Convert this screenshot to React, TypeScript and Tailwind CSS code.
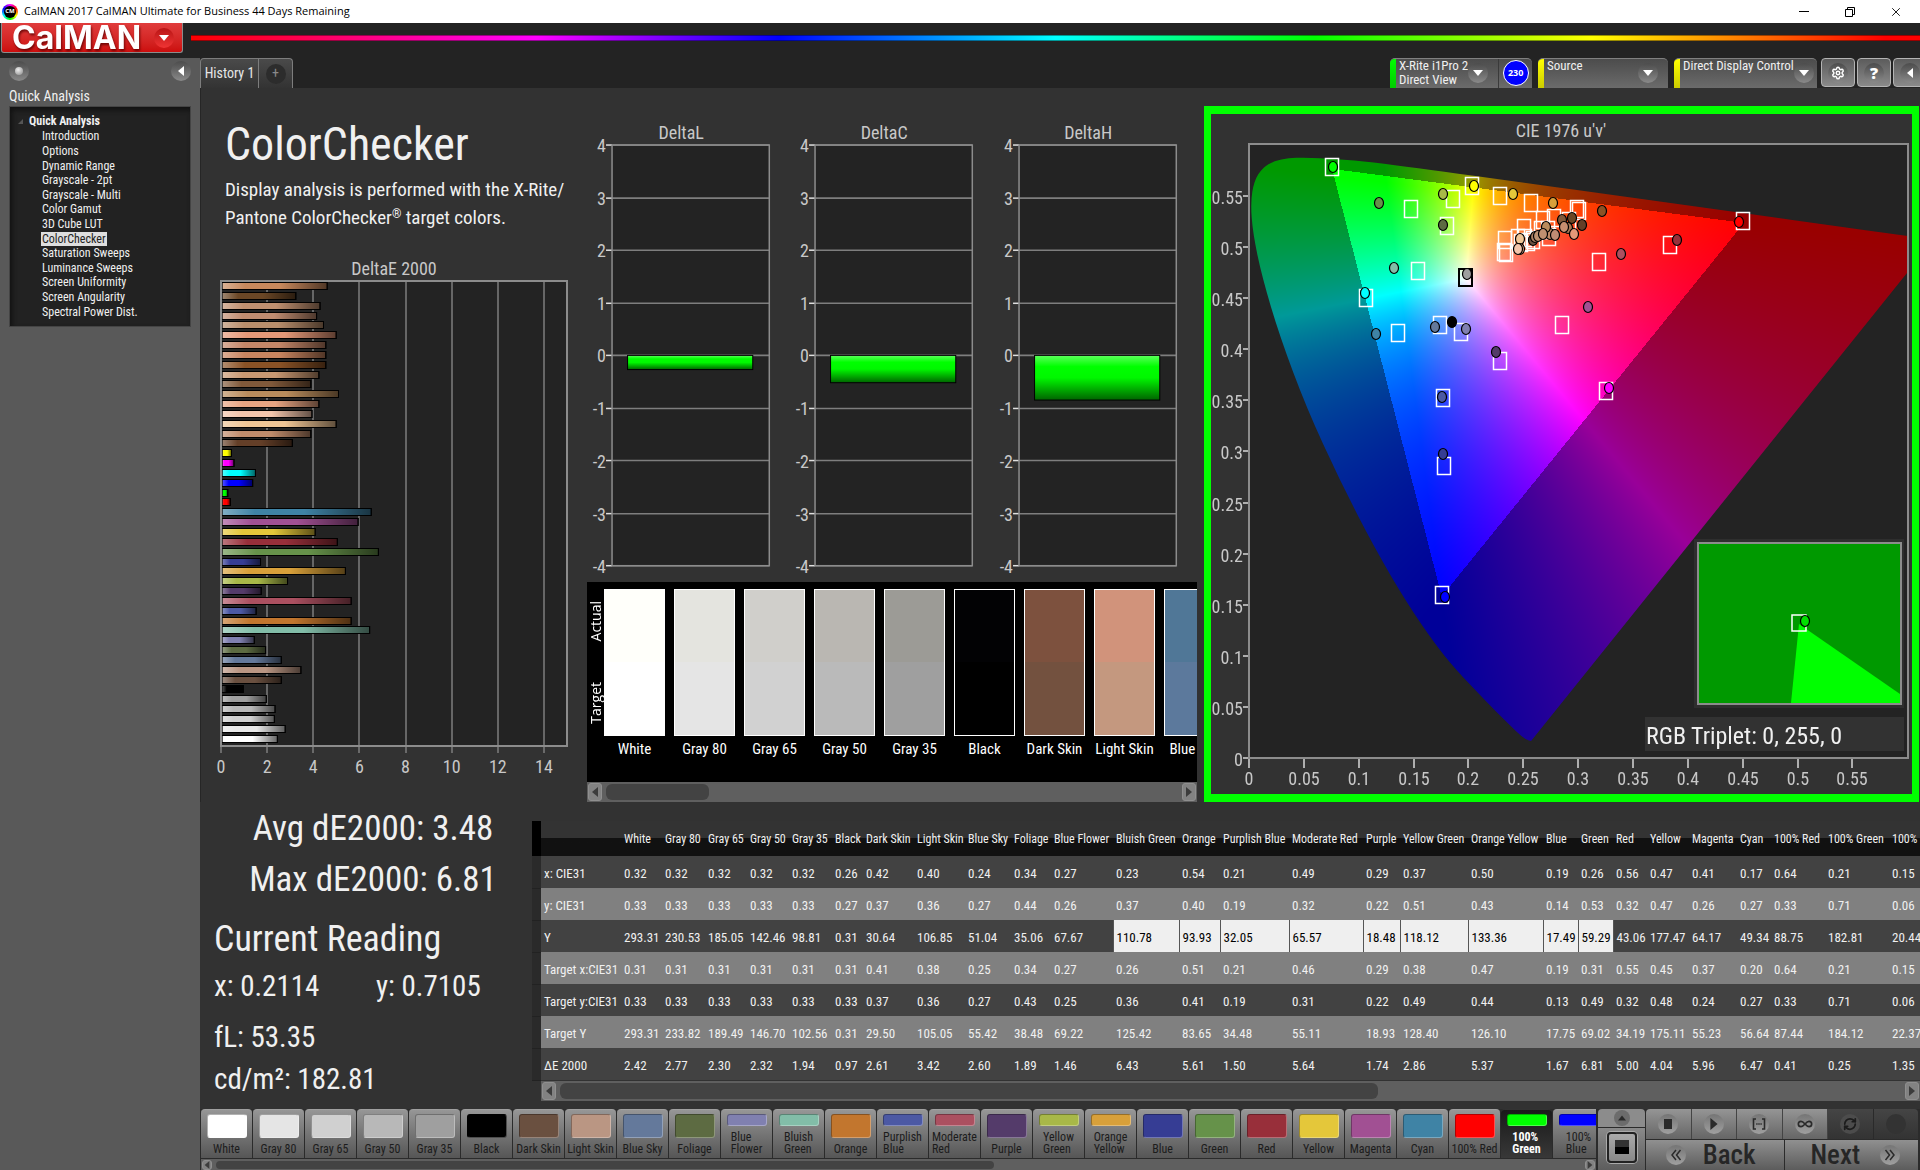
import { useEffect, useRef, type ReactNode } from 'react';
import { Infinity as InfinityIcon, RefreshCw, Settings, X } from 'lucide-react';

type Patch = { name: string; color: string; split?: boolean };

const PATCHES: Patch[] = [
  { name: 'White', color: '#ffffff' },
  { name: 'Gray 80', color: '#e5e5e5' },
  { name: 'Gray 65', color: '#d0d0d0' },
  { name: 'Gray 50', color: '#b8b8b8' },
  { name: 'Gray 35', color: '#9f9f9f' },
  { name: 'Black', color: '#000000' },
  { name: 'Dark Skin', color: '#6a5040' },
  { name: 'Light Skin', color: '#ba9683' },
  { name: 'Blue Sky', color: '#64799b' },
  { name: 'Foliage', color: '#5d6b42' },
  { name: 'Blue Flower', color: '#8080b0', split: true },
  { name: 'Bluish Green', color: '#82bda8', split: true },
  { name: 'Orange', color: '#c2762e' },
  { name: 'Purplish Blue', color: '#4c59a4', split: true },
  { name: 'Moderate Red', color: '#ab5060', split: true },
  { name: 'Purple', color: '#543b6a' },
  { name: 'Yellow Green', color: '#a8b848', split: true },
  { name: 'Orange Yellow', color: '#d8a03a', split: true },
  { name: 'Blue', color: '#363d94' },
  { name: 'Green', color: '#66924a' },
  { name: 'Red', color: '#982f3a' },
  { name: 'Yellow', color: '#e4c73a' },
  { name: 'Magenta', color: '#a15093' },
  { name: 'Cyan', color: '#3f83a5' },
  { name: '100% Red', color: '#ff0000' },
  { name: '100% Green', color: '#00ff00', split: true },
  { name: '100% Blue', color: '#0000ff', split: true },
];

const COLUMN_WIDTHS = [
  41, 43, 42, 42, 43, 31, 51, 51, 46, 40, 62, 66, 41, 69, 74, 37, 68, 75, 35, 35, 34, 42, 48, 34, 54, 64, 64,
];

const ROWS: { label: string; values: string }[] = [
  { label: 'x: CIE31', values: '0.32 0.32 0.32 0.32 0.32 0.26 0.42 0.40 0.24 0.34 0.27 0.23 0.54 0.21 0.49 0.29 0.37 0.50 0.19 0.26 0.56 0.47 0.41 0.17 0.64 0.21 0.15' },
  { label: 'y: CIE31', values: '0.33 0.33 0.33 0.33 0.33 0.27 0.37 0.36 0.27 0.44 0.26 0.37 0.40 0.19 0.32 0.22 0.51 0.43 0.14 0.53 0.32 0.47 0.26 0.27 0.33 0.71 0.06' },
  { label: 'Y', values: '293.31 230.53 185.05 142.46 98.81 0.31 30.64 106.85 51.04 35.06 67.67 110.78 93.93 32.05 65.57 18.48 118.12 133.36 17.49 59.29 43.06 177.47 64.17 49.34 88.75 182.81 20.44' },
  { label: 'Target x:CIE31', values: '0.31 0.31 0.31 0.31 0.31 0.31 0.41 0.38 0.25 0.34 0.27 0.26 0.51 0.21 0.46 0.29 0.38 0.47 0.19 0.31 0.55 0.45 0.37 0.20 0.64 0.21 0.15' },
  { label: 'Target y:CIE31', values: '0.33 0.33 0.33 0.33 0.33 0.33 0.37 0.36 0.27 0.43 0.25 0.36 0.41 0.19 0.31 0.22 0.49 0.44 0.13 0.49 0.32 0.48 0.24 0.27 0.33 0.71 0.06' },
  { label: 'Target Y', values: '293.31 233.82 189.49 146.70 102.56 0.31 29.50 105.05 55.42 38.48 69.22 125.42 83.65 34.48 55.11 18.93 128.40 126.10 17.75 69.02 34.19 175.11 55.23 56.64 87.44 184.12 22.37' },
  { label: 'ΔE 2000', values: '2.42 2.77 2.30 2.32 1.94 0.97 2.61 3.42 2.60 1.89 1.46 6.43 5.61 1.50 5.64 1.74 2.86 5.37 1.67 6.81 5.00 4.04 5.96 6.47 0.41 0.25 1.35' },
];

const DELTA_E: [number, string][] = [
  [4.56, '#c8895d'], [3.2, '#6b4726'], [4.25, '#c09070'], [4.1, '#c08c70'], [4.4, '#b98e6c'],
  [4.95, '#e59878'], [4.5, '#c48668'], [4.5, '#c98560'], [4.5, '#8a5226'], [4.2, '#c99872'],
  [3.85, '#80593a'], [5.05, '#b98c5c'], [4.2, '#e8a582'], [3.9, '#f3c5ac'], [4.95, '#f0c696'],
  [3.85, '#c08c6c'], [3.05, '#643f28'], [0.41, '#ffff00'], [0.52, '#ff00ff'], [1.45, '#00ffff'],
  [1.33, '#0000ff'], [0.25, '#00ff00'], [0.36, '#ff0000'], [6.47, '#3f83a5'], [5.9, '#a15093'],
  [4.04, '#e4c73a'], [5, '#982f3a'], [6.78, '#66924a'], [1.67, '#363d94'], [5.35, '#d8a03a'],
  [2.84, '#a8b848'], [1.7, '#543b6a'], [5.6, '#ab5060'], [1.48, '#4c59a4'], [5.6, '#c2762e'],
  [6.4, '#82bda8'], [1.4, '#8080b0'], [1.89, '#5d6b42'], [2.57, '#64799b'], [3.42, '#ba9683'],
  [2.57, '#6a5040'], [0.92, '#000000'], [1.92, '#9f9f9f'], [2.3, '#b8b8b8'], [2.27, '#d0d0d0'],
  [2.74, '#e8e8e8'], [2.4, '#ffffff'],
];

const COMPARISON = [
  { name: 'White', actual: '#fffffa', target: '#ffffff' },
  { name: 'Gray 80', actual: '#e4e4df', target: '#e5e5e5' },
  { name: 'Gray 65', actual: '#d0cfcb', target: '#d1d1d1' },
  { name: 'Gray 50', actual: '#bab7b2', target: '#bababa' },
  { name: 'Gray 35', actual: '#9c9b96', target: '#9f9f9f' },
  { name: 'Black', actual: '#020204', target: '#000000' },
  { name: 'Dark Skin', actual: '#7d513e', target: '#73513f' },
  { name: 'Light Skin', actual: '#d1937b', target: '#c4987f' },
  { name: 'Blue Sky', actual: '#507797', target: '#5c799c' },
];

const NAV = [
  'Introduction', 'Options', 'Dynamic Range', 'Grayscale - 2pt', 'Grayscale - Multi', 'Color Gamut', '3D Cube LUT',
  'ColorChecker', 'Saturation Sweeps', 'Luminance Sweeps', 'Screen Uniformity', 'Screen Angularity', 'Spectral Power Dist.',
];

/* ---------- shared pieces ---------- */

function Knob({ children }: { children?: ReactNode }) {
  return (
    <span className="flex size-5 shrink-0 items-center justify-center rounded-full bg-linear-to-b from-[#4c4c4c] to-[#8a8a8a] text-white">
      {children}
    </span>
  );
}

function Triangle({ dir, className }: { dir: 'up' | 'down' | 'left' | 'right'; className?: string }) {
  const d = { up: 'M0 8 5 2 10 8z', down: 'M0 2h10L5 8z', left: 'M8 0v10L2 5z', right: 'M2 0v10l6-5z' }[dir];
  return (
    <svg viewBox="0 0 10 10" className={className ?? 'size-2.5'} fill="currentColor" aria-hidden="true">
      <path d={d} />
    </svg>
  );
}

function ScrollBar({ thumb, slim, label }: { thumb: string; slim?: boolean; label: string }) {
  const arrow =
    'flex shrink-0 items-center justify-center rounded-[3px] border border-[#8f8f8f] bg-[#828282] text-[#3c3c3c] ' +
    (slim ? 'w-2.5' : 'w-3.5');
  return (
    <div className={`flex items-stretch gap-1 bg-[#5f5f5f] p-px ${slim ? 'h-3' : 'h-5'}`} role="group" aria-label={label}>
      <button type="button" aria-label="Scroll left" className={arrow}>
        <Triangle dir="left" className={slim ? 'size-2' : 'size-2.5'} />
      </button>
      <div className="flex-1 py-px">
        <div className={`h-full rounded-md bg-[#434343] ${thumb}`} />
      </div>
      <button type="button" aria-label="Scroll right" className={arrow}>
        <Triangle dir="right" className={slim ? 'size-2' : 'size-2.5'} />
      </button>
    </div>
  );
}

/* ---------- chrome ---------- */

function TitleBar() {
  return (
    <header className="flex h-[23px] items-center bg-white pl-0.5 font-['Open_Sans',sans-serif] text-black">
      <span className="flex size-4 items-center justify-center rounded-full bg-[conic-gradient(#f0f,#f00,#ff0,#0f0,#0ff,#00f,#f0f)]">
        <span className="flex size-3 items-center justify-center rounded-full bg-black text-[6px] font-bold text-white">CM</span>
      </span>
      <span className="ml-1.5 flex-1 text-[11px]">CalMAN 2017 CalMAN Ultimate for Business 44 Days Remaining</span>
      <button type="button" aria-label="Minimize" className="flex w-[46px] justify-center">
        <span className="h-px w-2.5 bg-black" />
      </button>
      <button type="button" aria-label="Restore" className="flex w-[46px] justify-center">
        <svg viewBox="0 0 10 10" className="size-2.5" fill="none" stroke="#000" aria-hidden="true">
          <path d="M.5 2.5h7v7h-7zM2.5 2.5v-2h7v7h-2" />
        </svg>
      </button>
      <button type="button" aria-label="Close" className="mr-px flex w-[46px] justify-center">
        <X className="size-3.5" strokeWidth={1.5} />
      </button>
    </header>
  );
}

function BrandBar() {
  return (
    <div className="flex h-[35px] items-start gap-2 bg-[#232323]">
      <button
        type="button"
        className="ml-px flex h-[30px] w-[182px] items-center justify-between rounded-b-[3px] border border-t-0 border-[#8c8c8c] bg-linear-to-b from-[#e03c3c] to-[#cc0c0c] pr-2 pl-2.5 text-white"
      >
        <span className="font-['Inter',sans-serif] text-[32px] leading-[30px] font-bold drop-shadow-[1px_2px_1px_rgba(90,0,0,0.8)]">CalMAN</span>
        <span className="flex size-5 items-center justify-center rounded-full bg-linear-to-b from-[#b81414] to-[#f03434]">
          <Triangle dir="down" />
        </span>
      </button>
      <div className="mt-3 h-1.5 flex-1 border-y border-black/40 bg-[linear-gradient(90deg,#f00_0%,#f0f_20%,#00f_34%,#0ff_50%,#0f0_65%,#ff0_81%,#f00_98%)]" />
    </div>
  );
}

function Sidebar() {
  return (
    <aside className="w-[200px] shrink-0 bg-[#595959] px-[9px] pt-[3px] text-[#f0f0f0]">
      <div className="flex items-center justify-between">
        <button type="button" aria-label="Pin panel">
          <Knob>
            <span className="size-2 rounded-full bg-[radial-gradient(circle_at_40%_35%,#eee,#888)]" />
          </Knob>
        </button>
        <button type="button" aria-label="Collapse panel">
          <Knob>
            <Triangle dir="left" />
          </Knob>
        </button>
      </div>
      <h2 className="mt-[5px] text-[14px] leading-[20px]">Quick Analysis</h2>
      <nav className="h-[221px] border border-[#444] bg-[#222] pt-[6px] pl-2 text-[12px] shadow-[inset_2px_3px_5px_#111]">
        <div className="flex h-4 items-center gap-1.5 font-bold">
          <svg viewBox="0 0 5 5" className="size-[5px]" fill="#555" aria-hidden="true">
            <path d="M5 0v5H0z" />
          </svg>
          <a href="#quick-analysis">Quick Analysis</a>
        </div>
        <ul className="grid h-[190px] pl-[23px]">
          {NAV.map((item) => (
            <li key={item} className="flex items-center leading-[14px]">
              <a
                href={`#${item}`}
                className={item === 'ColorChecker' ? 'bg-[#dedede] px-px text-[#222]' : 'px-px'}
                aria-current={item === 'ColorChecker' ? 'page' : undefined}
              >
                {item}
              </a>
            </li>
          ))}
        </ul>
      </nav>
    </aside>
  );
}

function DeviceTab({ accent, width, children, extra }: { accent: string; width: string; children: ReactNode; extra?: ReactNode }) {
  return (
    <div
      className={`flex h-[30px] overflow-hidden rounded-t-[5px] border-t border-[#808080] bg-linear-to-b from-[#4c4c4c] to-[#6b6b6b] text-[#f0f0f0] ${width}`}
    >
      <button type="button" className="flex flex-1 items-start pr-2.5 text-left">
        <span className={`mr-[3px] h-full w-1.5 shrink-0 ${accent}`} />
        <span className="flex-1 text-[13px] leading-[14px] whitespace-nowrap">{children}</span>
        <span className="mt-1">
          <Knob>
            <Triangle dir="down" />
          </Knob>
        </span>
      </button>
      {extra}
    </div>
  );
}

function TabBar() {
  const square =
    'flex h-[29px] w-[34px] shrink-0 items-center justify-center rounded-[4px] border border-[#b4b4b4] bg-linear-to-b from-[#5c5c5c] to-[#8a8a8a]';
  return (
    <div className="flex h-[30px] items-end overflow-hidden bg-[#232323]">
      <div className="flex h-[30px] rounded-t-[4px] border border-b-0 border-[#7d7d7d] bg-linear-to-b from-[#4a4a4a] to-[#333] text-[#e6e6e6]">
        <button type="button" className="w-[58px] border-r border-[#7d7d7d] text-[14px]">History 1</button>
        <button type="button" aria-label="Add history" className="flex w-[33px] items-center justify-center">
          <span className="flex size-5 items-center justify-center rounded-full bg-[#2c2c2c] text-[14px] text-[#8a8a8a]">+</span>
        </button>
      </div>
      <div className="ml-auto flex items-start gap-[6px]">
        <DeviceTab
          accent="bg-linear-to-b from-[#00ff00] to-[#00cc00]"
          width="w-[142px]"
          extra={
            <div className="flex w-[34px] items-center justify-center border-l border-[#3a3a3a]">
              <span className="mb-0.5 flex size-[26px] items-center justify-center rounded-full border border-white bg-[#0000ff] font-['Open_Sans',sans-serif] text-[9px] font-bold text-white">
                230
              </span>
            </div>
          }
        >
          X-Rite i1Pro 2
          <br />
          Direct View
        </DeviceTab>
        <DeviceTab accent="bg-linear-to-b from-[#ffff00] to-[#cccc00]" width="w-[130px]">Source</DeviceTab>
        <DeviceTab accent="bg-linear-to-b from-[#ffff00] to-[#cccc00]" width="w-[143px]">Direct Display Control</DeviceTab>
        <div className="-mr-[7px] -ml-0.5 flex gap-0.5">
          <button type="button" aria-label="Settings" className={square}>
            <Knob><Settings className="size-3.5" strokeWidth={2.5} /></Knob>
          </button>
          <button type="button" aria-label="Help" className={square}>
            <Knob><span className="font-['Open_Sans',sans-serif] text-[16px] font-extrabold">?</span></Knob>
          </button>
          <button type="button" aria-label="Collapse toolbar" className={square}>
            <Knob><Triangle dir="left" /></Knob>
          </button>
        </div>
      </div>
    </div>
  );
}

/* ---------- charts ---------- */

function DeltaEChart() {
  const left = 221;
  const unit = 346 / 15;
  return (
    <svg viewBox="200 255 387 530" className="mt-[23px] w-full fill-[#c8c8c8] text-[18px]" role="img" aria-label="DeltaE 2000">
      <defs>
        <linearGradient id="bar-shade">
          <stop offset="0" stopColor="#fff" stopOpacity=".35" />
          <stop offset=".22" stopColor="#fff" stopOpacity="0" />
          <stop offset=".55" stopColor="#000" stopOpacity="0" />
          <stop offset="1" stopColor="#000" stopOpacity=".6" />
        </linearGradient>
      </defs>
      <text x="394" y="275" textAnchor="middle">DeltaE 2000</text>
      <rect x={left} y="281" width="346" height="465" fill="#232323" />
      {[0, 2, 4, 6, 8, 10, 12, 14].map((n) => (
        <g key={n}>
          <path d={`M${Math.round(left + n * unit)} 281V753`} stroke="#7e7e7e" strokeWidth="1.5" />
          <text x={left + n * unit} y="773" textAnchor="middle">{n}</text>
        </g>
      ))}
      {DELTA_E.map(([value, color], i) => {
        const y = Math.round(282 + i * 9.84);
        const w = value * unit;
        return (
          <g key={i} stroke="#000">
            <rect x={left + 1} y={y + 0.5} width={w} height="7" fill={color} />
            <rect x={left + 1} y={y + 0.5} width={w} height="7" fill="url(#bar-shade)" />
          </g>
        );
      })}
      <rect x={left} y="281" width="346" height="465" fill="none" stroke="#8c8c8c" strokeWidth="2" />
    </svg>
  );
}

function DeltaChart({ title, value }: { title: string; value: number }) {
  const zero = 235;
  return (
    <svg viewBox="0 0 203 460" className="min-w-0 flex-1 fill-[#c8c8c8] text-[18px]" role="img" aria-label={title}>
      <defs>
        <linearGradient id={`bar-${title}`} x2="0" y2="1">
          <stop offset="0" stopColor="#5dff5d" />
          <stop offset=".25" stopColor="#00ff00" />
          <stop offset=".5" stopColor="#00f800" />
          <stop offset="1" stopColor="#006400" />
        </linearGradient>
      </defs>
      <text x="94" y="19" textAnchor="middle">{title}</text>
      <rect x="25" y="25" width="157" height="420" fill="#232323" />
      {[4, 3, 2, 1, 0, -1, -2, -3, -4].map((n) => {
        const y = Math.round(zero - n * 52.5);
        return (
          <g key={n}>
            <path d={`M25 ${y}H182`} stroke="#7e7e7e" strokeWidth="1.5" />
            <path d={`M19 ${y}h6`} stroke="#e0e0e0" strokeWidth="1.5" />
            <text x="19" y={y + 7} textAnchor="end">{n}</text>
          </g>
        );
      })}
      <rect x="40.5" y={zero} width="125" height={value * 52.5} fill={`url(#bar-${title})`} stroke="#000" />
      <rect x="25" y="25" width="157" height="420" fill="none" stroke="#8c8c8c" strokeWidth="1.5" />
    </svg>
  );
}

function Comparison() {
  return (
    <div className="mt-px bg-black">
      <div className="flex h-[200px] overflow-hidden pt-[7px]">
        <div className="flex h-[147px] w-[17px] shrink-0 flex-col items-center justify-between pt-3 pb-3 font-['Open_Sans',sans-serif] text-[14px] leading-[17px] font-medium text-white">
          <span className="rotate-180 [writing-mode:vertical-rl]">Actual</span>
          <span className="rotate-180 [writing-mode:vertical-rl]">Target</span>
        </div>
        <div className="flex gap-[9px]">
          {COMPARISON.map((c) => (
            <figure key={c.name} className="w-[61px] shrink-0">
              <div className="flex h-[147px] flex-col border border-white">
                <div className="flex-1" style={{ backgroundColor: c.actual }} />
                <div className="flex-1" style={{ backgroundColor: c.target }} />
              </div>
              <figcaption className="mt-1 text-center text-[15px] leading-[18px] whitespace-nowrap text-white">{c.name}</figcaption>
            </figure>
          ))}
        </div>
      </div>
      <ScrollBar thumb="w-[103px]" label="Swatch scroll" />
    </div>
  );
}

/* Spectral locus of the CIE 1931 observer, x and y pairs. */
const LOCUS = [
  0.1741, 0.005, 0.1714, 0.0051, 0.1644, 0.0109, 0.1566, 0.0177, 0.144, 0.0297, 0.1355, 0.0399, 0.1241, 0.0578, 0.1096,
  0.0868, 0.0913, 0.1327, 0.0687, 0.2007, 0.0454, 0.295, 0.0235, 0.4127, 0.0082, 0.5384, 0.0039, 0.6548, 0.0139, 0.7502,
  0.0389, 0.812, 0.0743, 0.8338, 0.1142, 0.8262, 0.1547, 0.8059, 0.2296, 0.7543, 0.3016, 0.6923, 0.3731, 0.6245, 0.4441,
  0.5547, 0.5125, 0.4866, 0.5752, 0.4242, 0.627, 0.3725, 0.6658, 0.334, 0.6915, 0.3083, 0.719, 0.2809, 0.7347, 0.2653,
];
const PLOT_W = 659;
const PLOT_H = 614;

function Horseshoe() {
  const ref = useRef<HTMLCanvasElement>(null);
  useEffect(() => {
    const canvas = ref.current;
    const ctx = canvas?.getContext('2d');
    if (!canvas || !ctx) return;
    const image = ctx.createImageData(PLOT_W, PLOT_H);
    for (let py = 0; py < PLOT_H; py++) {
      for (let px = 0; px < PLOT_W; px++) {
        const u = ((px + 0.5) / PLOT_W) * 0.6;
        const v = (1 - (py + 0.5) / PLOT_H) * 0.6;
        const X = (9 * u) / (4 * v);
        const Z = (12 - 3 * u - 20 * v) / (4 * v);
        // Colour comes from the sRGB primaries; the bright gamut triangle is Adobe RGB.
        const lin = [
          3.2406 * X - 1.5372 - 0.4986 * Z,
          -0.9689 * X + 1.8758 + 0.0415 * Z,
          0.0557 * X - 0.204 + 1.057 * Z,
        ];
        const outside =
          2.04159 * X - 0.56501 - 0.34473 * Z < 0 ||
          -0.96924 * X + 1.87597 + 0.04156 * Z < 0 ||
          0.01344 * X - 0.11836 + 1.01517 * Z < 0;
        const top = Math.max(lin[0], lin[1], lin[2]);
        const gain = outside ? 153 : 255;
        const at = (py * PLOT_W + px) * 4;
        for (let k = 0; k < 3; k++) image.data[at + k] = (gain * Math.max(0, lin[k])) / top;
        image.data[at + 3] = 255;
      }
    }
    ctx.putImageData(image, 0, 0);
    const points: [number, number][] = [];
    for (let i = 0; i < LOCUS.length; i += 2) {
      const d = -2 * LOCUS[i] + 12 * LOCUS[i + 1] + 3;
      points.push([(((4 * LOCUS[i]) / d) * PLOT_W) / 0.6, PLOT_H - (((9 * LOCUS[i + 1]) / d) * PLOT_H) / 0.6]);
    }
    ctx.globalCompositeOperation = 'destination-in';
    ctx.beginPath();
    ctx.moveTo(points[0][0], points[0][1]);
    for (let i = 1; i < points.length - 1; i++) {
      const [x, y] = points[i];
      const [nx, ny] = points[i + 1];
      ctx.quadraticCurveTo(x, y, (x + nx) / 2, (y + ny) / 2);
    }
    const last = points[points.length - 1];
    ctx.lineTo(last[0], last[1]);
    ctx.closePath();
    ctx.fill();
  }, []);
  return <canvas ref={ref} width={PLOT_W} height={PLOT_H} className="block" />;
}

const TARGETS: [number, number][] = [
  [1332, 167], [1411, 209], [1453, 199], [1472, 186], [1447, 226], [1500, 196], [1531, 203], [1577, 209], [1579, 211],
  [1543, 220], [1554, 218], [1569, 221], [1524, 228], [1505, 240], [1504, 252], [1506, 253], [1518, 238], [1521, 243],
  [1525, 238], [1533, 240], [1528, 242], [1541, 230], [1548, 230], [1549, 237], [1418, 271], [1366, 298], [1398, 333],
  [1440, 325], [1461, 332], [1500, 361], [1443, 398], [1444, 466], [1562, 325], [1599, 262], [1606, 391], [1670, 245],
  [1743, 221], [1442, 595],
];
const READINGS: [number, number, string][] = [
  [1333, 167, '#00ff00'], [1379, 203, '#66924a'], [1443, 194, '#a8b848'], [1474, 186, '#ffff00'], [1513, 194, '#e4c73a'],
  [1553, 203, '#d8a03a'], [1602, 211, '#8a5226'], [1443, 225, '#5d6b42'], [1562, 220, '#80593a'], [1568, 228, '#a87a58'],
  [1572, 218, '#6b4726'], [1582, 225, '#643f28'], [1564, 227, '#c98f70'], [1574, 234, '#e59878'], [1550, 234, '#c08c68'],
  [1546, 227, '#b98c5c'], [1555, 235, '#c08c74'], [1533, 240, '#6a5040'], [1535, 237, '#a87f63'], [1538, 236, '#ba9070'],
  [1543, 234, '#c09070'], [1520, 239, '#f0c696'], [1520, 249, '#e8a582'], [1518, 249, '#f3c5ac'], [1394, 268, '#82bda8'],
  [1365, 293, '#00ffff'], [1376, 334, '#3f83a5'], [1435, 327, '#64799b'], [1452, 322, '#000000'], [1466, 329, '#8080b0'],
  [1496, 352, '#543b6a'], [1442, 397, '#4c59a4'], [1443, 454, '#363d94'], [1588, 307, '#a15093'], [1609, 388, '#ff00ff'],
  [1467, 274, '#9f9f9f'], [1621, 254, '#ab5060'], [1677, 240, '#982f3a'], [1739, 222, '#ff0000'], [1445, 597, '#0000ff'],
];

function Chromaticity() {
  const ticks = Array.from({ length: 12 }, (_, i) => i);
  const name = (i: number) => String(Math.round(i * 5) / 100);
  return (
    <section className="mt-[18px] mr-px ml-[7px] min-w-0 flex-1 self-start border-x-7 border-y-8 border-[#00ff00] bg-[#323232]">
      <svg viewBox="1211 114 701 680" className="w-full fill-[#c8c8c8] text-[18px]" role="img" aria-label="CIE 1976 u'v'">
        <text x="1561" y="137" textAnchor="middle">CIE 1976 u'v'</text>
        <rect x="1249" y="144" width="659" height="614" fill="#232323" />
        <foreignObject x="1249" y="144" width="659" height="614">
          <Horseshoe />
        </foreignObject>
        {ticks.map((i) => {
          const x = Math.round(1249 + i * 54.85);
          const y = Math.round(758 - i * 51.1);
          return (
            <g key={i}>
              <path d={`M${x} 759v9M1243 ${y}h6`} stroke="#d8d8d8" strokeWidth="1.5" />
              <text x={x} y="785" textAnchor="middle">{name(i)}</text>
              <text x="1243" y={y + 8} textAnchor="end">{name(i)}</text>
            </g>
          );
        })}
        <rect x="1249" y="144" width="659" height="614" fill="none" stroke="#8c8c8c" strokeWidth="2" />
        {TARGETS.map(([x, y], i) => (
          <rect key={i} x={x - 6.5} y={y - 8.5} width="13" height="17" fill="none" stroke="#fff" strokeWidth="1.5" />
        ))}
        <rect x="1459" y="269" width="13" height="17" fill="none" stroke="#000" strokeWidth="2" />
        {READINGS.map(([x, y, color], i) => (
          <ellipse key={i} cx={x} cy={y} rx="4.5" ry="5.5" fill={color} stroke="#000" strokeWidth="1.2" />
        ))}
        <rect x="1694" y="539" width="210" height="169" fill="#2e2e2e" />
        <rect x="1698" y="543" width="203" height="161" fill="#009900" stroke="#8c8c8c" strokeWidth="2" />
        <path d="M1799 624 1900 694V703H1791z" fill="#00ff00" />
        <rect x="1792" y="615" width="14" height="16" fill="none" stroke="#fff" strokeWidth="1.5" />
        <ellipse cx="1805" cy="621" rx="4.5" ry="5.5" fill="#00e000" stroke="#000" strokeWidth="1.2" />
        <rect x="1645" y="717" width="259" height="34" fill="#323232" />
        <text x="1646" y="744" className="fill-[#f0f0f0] text-[24px]">RGB Triplet: 0, 255, 0</text>
      </svg>
    </section>
  );
}

/* ---------- lower area ---------- */

function Readings() {
  return (
    <section className="w-[332px] shrink-0 pl-[14px] text-[29px] leading-[40px] text-[#f0f0f0]">
      <div className="pt-px text-center text-[35px] leading-[51px]">
        <p>Avg dE2000: 3.48</p>
        <p>Max dE2000: 6.81</p>
      </div>
      <h2 className="mt-3 text-[36px] leading-[44px]">Current Reading</h2>
      <div className="mt-[5px] flex">
        <p className="w-[162px]">x: 0.2114</p>
        <p>y: 0.7105</p>
      </div>
      <p className="mt-[11px]">fL: 53.35</p>
      <p className="mt-0.5">cd/m²: 182.81</p>
    </section>
  );
}

function DataTable() {
  return (
    <section className="mt-[19px] min-w-0 flex-1">
      <div className="overflow-hidden">
        <table className="w-[1421px] table-fixed border-collapse text-left text-[13px] whitespace-nowrap text-[#f0f0f0]">
          <colgroup>
            <col style={{ width: 9 }} />
            <col style={{ width: 80 }} />
            {COLUMN_WIDTHS.map((w, i) => (
              <col key={i} style={{ width: w }} />
            ))}
          </colgroup>
          <thead>
            <tr className="h-[35px] bg-linear-to-b from-[#333] from-50% to-[#111] to-50% text-[12px]">
              <td className="bg-black" />
              <td />
              {PATCHES.map((p) => (
                <th key={p.name} scope="col" className="pl-[3px] font-normal">{p.name}</th>
              ))}
            </tr>
          </thead>
          <tbody>
            {ROWS.map((row, r) => (
              <tr key={row.label} className={`h-8 ${r % 2 ? 'bg-[#808080]' : 'bg-[#424242]'}`}>
                <td className="border-b border-[#222] bg-[#2a2a2a]" />
                <th scope="row" className="pt-[3px] pl-[3px] font-normal">{row.label}</th>
                {row.values.split(' ').map((v, i) => (
                  <td
                    key={i}
                    className={
                      row.label === 'Y' && i > 10 && i < 20
                        ? 'border-x border-[#555] bg-[#efefef] pt-[3px] pl-[3px] text-black'
                        : 'pt-[3px] pl-[3px]'
                    }
                  >
                    {v}
                  </td>
                ))}
              </tr>
            ))}
          </tbody>
        </table>
      </div>
      <div className="ml-[9px]">
        <ScrollBar thumb="w-[61%]" label="Table scroll" />
      </div>
    </section>
  );
}

function PatchButton({ patch }: { patch: Patch }) {
  const selected = patch.name === '100% Green';
  return (
    <button
      type="button"
      aria-pressed={selected}
      className={`flex h-[49px] w-[51px] shrink-0 flex-col items-center justify-between rounded-t-[4px] border-t pt-1 pb-[3px] ${
        selected
          ? 'border-[#333] bg-linear-to-b from-[#1a1a1a] to-[#383838] font-bold text-white'
          : 'border-[#a0a0a0] bg-linear-to-b from-[#969696] to-[#565656] text-[#1c1c1c]'
      }`}
    >
      <span
        className={`w-10 rounded-[3px] border border-t-black/30 border-r-white/30 border-b-white/30 border-l-black/30 ${
          patch.split ? 'h-3' : 'h-6'
        }`}
        style={{ backgroundColor: patch.color }}
      />
      <span className={`text-left text-[12px] leading-[12px] ${patch.split ? 'w-min' : 'whitespace-nowrap'}`}>{patch.name}</span>
    </button>
  );
}

function DoubleChevron({ flip }: { flip?: boolean }) {
  return (
    <svg viewBox="0 0 12 12" className="size-3" fill="none" stroke="currentColor" strokeWidth="1.5" aria-hidden="true">
      <path d={flip ? 'M6 1 2 6l4 5M10.500 1l-4 5 4 5' : 'M1.500 1l4 5-4 5M6 1l4 5-4 5'} />
    </svg>
  );
}

function BottomBar() {
  const media = 'flex h-[30px] flex-1 items-center justify-center border-r border-[#444] bg-linear-to-b from-[#959595] to-[#666] last:border-r-0';
  const off = 'flex h-[30px] flex-1 items-center justify-center border-r border-[#2a2a2a] bg-linear-to-b from-[#454545] to-[#333] last:border-r-0';
  const disc = 'flex size-5 items-center justify-center rounded-full bg-linear-to-b from-[#757575] to-[#a0a0a0] text-[#2a2a2a]';
  const step =
    'flex flex-1 items-center justify-between bg-linear-to-b from-[#909090] to-[#5c5c5c] text-[27px] leading-[30px] font-medium text-[#262626]';
  return (
    <footer className="mt-2 flex gap-0.5 bg-[#2b2b2b] pl-px">
      <div className="min-w-0 flex-1">
        <div className="flex h-[50px] gap-px overflow-hidden">
          {PATCHES.map((p) => (
            <PatchButton key={p.name} patch={p} />
          ))}
        </div>
        <ScrollBar thumb="w-[57%]" slim label="Patch scroll" />
      </div>
      <div className="flex w-[47px] flex-col gap-px">
        <button type="button" aria-label="Expand" className="flex h-[18px] items-center justify-center rounded-t-[4px] bg-[#8c8c8c]">
          <span className="flex size-4 items-center justify-center rounded-full bg-[#6c6c6c] text-[#2a2a2a]">
            <Triangle dir="up" className="size-2" />
          </span>
        </button>
        <button type="button" aria-label="Pattern window" className="flex h-[43px] items-center justify-center bg-linear-to-b from-[#8a8a8a] to-[#5c5c5c] pb-1">
          <span className="flex h-[31px] w-[30px] items-center justify-center rounded-[4px] border-2 border-[#222] bg-linear-to-b from-[#aaa] to-[#888] shadow-[0_0_0_1px_#aaa]">
            <span className="h-3.5 w-3.5 bg-linear-to-b from-[#333] from-50% to-black to-50%" />
          </span>
        </button>
      </div>
      <div className="mr-0.5 -ml-px w-[272px]">
        <div className="flex overflow-hidden rounded-t-[4px]">
          <button type="button" aria-label="Stop" className={media}><span className={disc}><span className="h-2.5 w-2 bg-current" /></span></button>
          <button type="button" aria-label="Play" className={media}><span className={disc}><Triangle dir="right" className="size-3" /></span></button>
          <button type="button" aria-label="Read series" className={media}>
            <span className={disc}>
              <svg viewBox="0 0 14 12" className="h-3 w-3.5" fill="none" stroke="currentColor" strokeWidth="1.6" aria-hidden="true">
                <path d="M4 1H1.5v10H4M10 1h2.5v10H10M4.2 6h1.4M6.3 6h1.4M8.400 6h1.400" />
              </svg>
            </span>
          </button>
          <button type="button" aria-label="Continuous" className={media}><span className={disc}><InfinityIcon className="size-4" strokeWidth={2.5} /></span></button>
          <button type="button" aria-label="Refresh" className={off}><span className="flex size-5 items-center justify-center rounded-full bg-[#4c4c4c] text-[#1c1c1c]"><RefreshCw className="size-3.5" strokeWidth={3} /></span></button>
          <button type="button" aria-label="Unassigned" className={off}><span className="size-5 rounded-full bg-[#333]" /></button>
        </div>
        <div className="mt-px flex gap-px">
          <button type="button" className={`${step} pr-7 pl-5`}>
            <span className={disc}><DoubleChevron flip /></span>Back
          </button>
          <button type="button" className={`${step} pr-[18px] pl-[26px]`}>
            Next<span className={disc}><DoubleChevron /></span>
          </button>
        </div>
      </div>
    </footer>
  );
}

export default function App() {
  return (
    <div className="flex min-h-screen flex-col overflow-hidden bg-[#323232] font-['Roboto_Condensed','Carlito',sans-serif]">
      <TitleBar />
      <BrandBar />
      <div className="flex flex-1">
        <Sidebar />
        <main className="flex min-w-0 flex-1 flex-col">
          <TabBar />
          <div className="flex border-l border-[#262626]">
            <section className="-ml-px w-[387px] shrink-0 pt-7 text-[#f0f0f0]">
              <h1 className="pl-[25px] text-[46px] leading-[56px]">ColorChecker</h1>
              <p className="mt-1 pl-[25px] text-[19px] leading-[28px]">
                Display analysis is performed with the X-Rite/
                <br />
                Pantone ColorChecker<sup className="text-[12px]">®</sup> target colors.
              </p>
              <DeltaEChart />
            </section>
            <section className="w-[610px] shrink-0 pt-8">
              <div className="flex">
                <DeltaChart title="DeltaL" value={0.27} />
                <DeltaChart title="DeltaC" value={0.52} />
                <DeltaChart title="DeltaH" value={0.85} />
              </div>
              <Comparison />
            </section>
            <Chromaticity />
          </div>
          <div className="flex">
            <Readings />
            <DataTable />
          </div>
          <BottomBar />
        </main>
      </div>
    </div>
  );
}
